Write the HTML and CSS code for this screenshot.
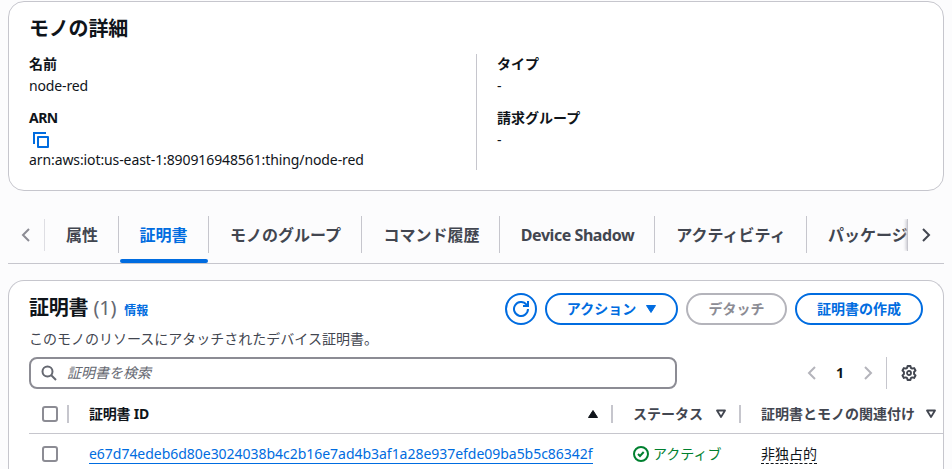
FILE: index.html
```html
<!DOCTYPE html>
<html lang="ja">
<head>
<meta charset="utf-8">
<title>モノの詳細</title>
<link rel="stylesheet" href="styles.css">
</head>
<body>
<main class="page">
  <section class="card details">
    <h2 class="title">モノの詳細</h2>
    <div class="columns">
      <dl class="column">
        <dt>名前</dt>
        <dd class="name">node-red</dd>
        <dt class="arn-label">ARN</dt>
        <dd class="arn">
          <svg class="copy" width="16" height="16" viewBox="0 0 16 16"><path d="M1 12V1h12" /><path stroke-linejoin="round" d="M5 5h10v10H5z" /></svg>
          <span class="arn-text">arn:aws:iot:us-east-1:890916948561:thing/node-red</span>
        </dd>
      </dl>
      <dl class="column second">
        <dt>タイプ</dt>
        <dd>-</dd>
        <dt>請求グループ</dt>
        <dd>-</dd>
      </dl>
    </div>
  </section>

  <nav class="tabs">
    <button class="scroll prev"><svg width="16" height="16" viewBox="0 0 16 16"><path d="M11 2L5 8l6 6" /></svg></button>
    <div class="tab-list">
      <a class="tab t1">属性</a>
      <a class="tab t2 active">証明書</a>
      <a class="tab t3">モノのグループ</a>
      <a class="tab t4">コマンド履歴</a>
      <a class="tab t5"><span class="latin-tab">Device Shadow</span></a>
      <a class="tab t6">アクティビティ</a>
      <a class="tab t7">パッケージ</a>
    </div>
    <button class="scroll next"><svg width="16" height="16" viewBox="0 0 16 16"><path d="M5 2l6 6-6 6" /></svg></button>
  </nav>

  <section class="card certs">
    <header class="header">
      <h2 class="title">証明書 <span class="count">(1)</span></h2>
      <a class="info">情報</a>
      <div class="actions">
        <button class="btn round"><svg width="16" height="16" viewBox="0 0 16 16"><path d="M15 8a7 7 0 1 1-1.700-4.600L15 5" /><path d="M10 5h5V0" /></svg></button>
        <button class="btn action">アクション<svg class="caret" width="12" height="10" viewBox="0 0 12 10"><path d="M1.500 1.500h9L6 8.500z" /></svg></button>
        <button class="btn detach">デタッチ</button>
        <button class="btn create">証明書の作成</button>
      </div>
    </header>
    <p class="description">このモノのリソースにアタッチされたデバイス証明書。</p>
    <div class="tools">
      <div class="search">
        <svg width="16" height="16" viewBox="0 0 16 16"><circle cx="6.500" cy="6.500" r="5" /><path d="M10 10l5 5" /></svg>
        <span class="placeholder">証明書を検索</span>
      </div>
      <div class="pager">
        <svg width="16" height="16" viewBox="0 0 16 16"><path d="M11 2L5 8l6 6" /></svg>
        <b class="page-number">1</b>
        <svg width="16" height="16" viewBox="0 0 16 16"><path d="M5 2l6 6-6 6" /></svg>
      </div>
      <div class="settings">
        <svg width="16" height="16" viewBox="0 0 16 16"><path d="M6.600 1h2.800l.5 1.900 1.300.7 1.900-.5 1.400 2.400-1.400 1.400v2.200l1.400 1.400-1.400 2.400-1.900-.5-1.300.7-.5 1.900H6.600l-.5-1.900-1.300-.7-1.900.5-1.400-2.400 1.400-1.400V6.900L1.500 5.500l1.400-2.400 1.900.5 1.300-.7z" /><circle cx="8" cy="8" r="2" /></svg>
      </div>
    </div>
    <div class="grid head">
      <div class="check"><i class="box"></i></div>
      <div class="cell id">証明書 ID<svg class="sort" width="12" height="10" viewBox="0 0 12 10"><path class="solid" d="M1.500 8.500h9L6 1.500z" /></svg></div>
      <div class="cell status">ステータス<svg class="sort" width="12" height="10" viewBox="0 0 12 10"><path d="M2 1.500h8L6 8z" /></svg></div>
      <div class="cell relation">証明書とモノの関連付け<svg class="sort" width="12" height="10" viewBox="0 0 12 10"><path d="M2 1.500h8L6 8z" /></svg></div>
    </div>
    <div class="grid row">
      <div class="check"><i class="box"></i></div>
      <div class="cell id"><a class="link">e67d74edeb6d80e3024038b4c2b16e7ad4b3af1a28e937efde09ba5b5c86342f</a></div>
      <div class="cell status"><svg width="16" height="16" viewBox="0 0 16 16"><circle cx="8" cy="8" r="7" /><path d="M5 8l2 2 3.700-4" /></svg>アクティブ</div>
      <div class="cell relation"><span class="term">非独占的</span></div>
    </div>
  </section>
</main>
</body>
</html>
```
FILE: styles.css
```css
* { box-sizing: border-box; }
html, body { margin: 0; height: 469px; overflow: hidden; }
body {
  background: #fcfcfd;
  color: #0f141a;
  font: 14px/20px "Noto Sans", "Noto Sans CJK JP", sans-serif;
}
svg { fill: none; stroke: currentColor; stroke-width: 2; flex: none; display: block; }
button { font: inherit; margin: 0; padding: 0; background: none; border: 0; color: inherit; }
.page { padding: 1px 8px 0; }
.card { background: #fff; border: 1px solid #c6c6cd; border-radius: 16px; width: 936px; }
.title { margin: 0; font-size: 20px; line-height: 24px; font-weight: 700; letter-spacing: -0.2px; white-space: nowrap; }

.details { height: 190px; padding: 15px 20px 0; }
.columns { display: grid; grid-template: 116px / 447px 1fr; margin-top: 13px; }
.column { margin: 0; }
.second { border-left: 1px solid #c6c6cd; padding-left: 20px; }
dt { font-weight: 700; line-height: 20px; }
dd { margin: 2px 0 12px; line-height: 20px; }
.name { letter-spacing: -0.15px; }
.arn-label { letter-spacing: -0.5px; }
.arn { margin-top: 4px; }
.copy { margin-left: 4px; color: #006ce0; }
.arn-text { display: block; margin-top: 2px; letter-spacing: -0.1px; white-space: nowrap; }

.tabs { display: flex; height: 73px; border-bottom: 1px solid #c6c6cd; width: 936px; padding-top: 25px; }
.scroll { display: flex; justify-content: center; padding-top: 8px; height: 32px; margin-top: 3px; width: 37px; }
.prev { color: #8c8c94; border-right: 1px solid #dedee3; }
.next { color: #424650; border-left: 1px solid #c6c6cd; box-shadow: -1px 0 3px #c6c6cd; clip-path: inset(0 0 0 -5px); z-index: 1; }
.tab-list { display: flex; width: 862px; overflow: hidden; height: 48px; }
.tab {
  position: relative; display: flex; justify-content: center; flex: none;
  height: 37px; padding-top: 8px; border-right: 1px solid #c6c6cd;
  font-size: 16px; line-height: 22px; font-weight: 700; color: #424650; white-space: nowrap;
}
.t1 { width: 74px; padding-left: 1px; }
.t2 { width: 90px; }
.t3 { width: 153px; padding-left: 1px; }
.t4 { width: 138px; padding-left: 2px; }
.t5 { width: 155px; }
.t6 { width: 152px; padding-left: 1px; }
.t7 { width: 140px; justify-content: flex-start; padding-left: 21px; }
.latin-tab { letter-spacing: -0.45px; padding-left: 1px; }
.active { color: #006ce0; }
.active::after {
  content: ""; position: absolute; left: 1px; right: 0; top: 43px; height: 4px;
  border-radius: 2px; background: #006ce0;
}

.certs { margin-top: 16px; height: 189px; padding: 12px 0 0 20px; border-bottom: 0; border-radius: 16px 16px 0 0; }
.header { display: flex; height: 32px; }
.header .title { line-height: 30px; }
.count { color: #656871; font-weight: 400; }
.info { margin: 8px 0 0 8px; color: #006ce0; font-size: 12px; font-weight: 700; }
.actions { display: flex; gap: 8px; margin-left: auto; margin-right: 20px; }
.btn {
  display: flex; align-items: center; justify-content: center; height: 32px;
  border: 2px solid #006ce0; border-radius: 16px; color: #006ce0; font-weight: 700; white-space: nowrap;
}
.round { width: 32px; }
.action { width: 133px; padding-left: 1px; }
.caret { margin-left: 9px; }
.caret path { fill: currentColor; stroke-width: 1; stroke-linejoin: round; }
.detach { width: 101px; border-color: #b4b4bb; color: #8c8c94; }
.create { width: 128px; }
.description { margin: 4px 0 8px; color: #424650; }
.tools { display: flex; height: 32px; }
.search {
  display: flex; align-items: center; width: 648px; border: 2px solid #8c8c94;
  border-radius: 8px; padding-left: 10px; color: #656871;
}
.placeholder { margin-left: 10px; font-style: italic; }
.pager { display: flex; align-items: center; margin-left: 127px; color: #b4b4bb; }
.page-number { width: 40px; text-align: center; color: #0f141a; }
.settings { display: flex; align-items: center; margin-left: 10px; border-left: 1px solid #c6c6cd; padding-left: 14px; color: #424650; }
.settings path { stroke-linejoin: round; stroke-width: 2; }
.settings circle { stroke-width: 1.800; }

.grid { display: grid; grid-template-columns: 40px 544px 128px 1fr; align-items: center; }
.head { height: 45px; padding-top: 6px; border-bottom: 1px solid #c6c6cd; font-weight: 700; color: #424650; }
.row { height: 40px; }
.check { display: flex; align-items: center; padding-left: 13px; }
.head .check, .head .id, .head .status { height: 18px; border-right: 2px solid #c6c6cd; }
.box { width: 16px; height: 16px; border: 2px solid #8c8c94; border-radius: 3px; }
.cell { display: flex; align-items: center; padding-left: 20px; white-space: nowrap; line-height: 20px; }
.head .id { color: #0f141a; letter-spacing: -0.2px; }
.sort { margin-left: 12px; }
.id .sort { margin-left: auto; margin-right: 12px; color: #0f141a; }
.relation .sort { margin-left: 10px; }
.sort path { stroke-width: 1.800; stroke-linejoin: round; }
.sort .solid { fill: currentColor; stroke-width: 1; }
.link { color: #006ce0; border-bottom: 1px solid #006ce0; line-height: 18px; letter-spacing: -0.03px; }
.row .status { color: #00802f; gap: 4px; }
.term { color: #0f141a; border-bottom: 1px dashed #0f141a; line-height: 18px; }
```
